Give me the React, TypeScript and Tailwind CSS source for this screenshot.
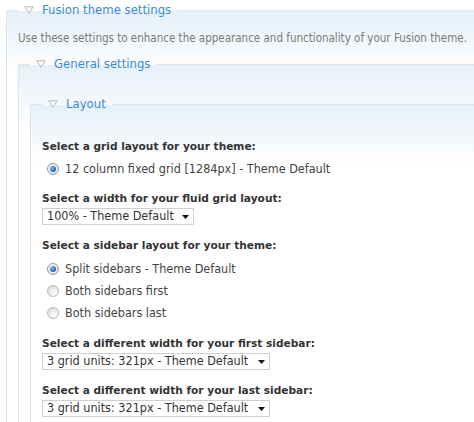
import type { ReactNode } from 'react';

function Legend({ children }: { children: ReactNode }) {
  return (
    <legend className="flex items-center gap-[8px] px-[6px] text-[13px] leading-[16px] text-[#3a8bd6]">
      <svg width="10" height="8" viewBox="0 0 10 8" className="shrink-0">
        <path d="M0.8 0.8 H9.2 L5 7.2 Z" fill="#fff" stroke="#b5b5b5" strokeWidth="1" />
      </svg>
      <span>{children}</span>
    </legend>
  );
}

function Radio({ checked, label }: { checked?: boolean; label: string }) {
  return (
    <div className="flex h-[22px] items-center pl-[5px]">
      {checked ? (
        <span className="flex h-[12px] w-[12px] items-center justify-center rounded-full border border-[#8e99a4] bg-[radial-gradient(circle_at_40%_35%,#fff,#d6dce2)]">
          <span className="h-[6px] w-[6px] rounded-full bg-[radial-gradient(circle_at_35%_35%,#8ec2f4,#1d5aa8_70%)]" />
        </span>
      ) : (
        <span className="h-[12px] w-[12px] rounded-full border border-[#b4b9be] bg-[radial-gradient(circle_at_65%_70%,#fff,#dcdcdc_80%)]" />
      )}
      <span className="ml-[6px] text-[12.5px] text-[#444]">{label}</span>
    </div>
  );
}

function Select({ value, width }: { value: string; width: string }) {
  return (
    <div className={`mt-[2px] flex h-[17px] items-center justify-between border border-[#cfcfcf] bg-white pl-[4px] pr-[4px] text-[12.5px] text-[#333] ${width}`}>
      <span className="leading-none">{value}</span>
      <svg width="7" height="4" viewBox="0 0 7 4">
        <path d="M0 0 H7 L3.5 4 Z" fill="#111" />
      </svg>
    </div>
  );
}

function Label({ children, className = '' }: { children: ReactNode; className?: string }) {
  return (
    <div
      className={`text-[10.6px] font-bold leading-[16px] text-[#333] ${className}`}
      style={{ fontFamily: '"DejaVu Sans", Verdana, sans-serif' }}
    >
      {children}
    </div>
  );
}

const fieldset =
  'border border-[#d9e6f2] bg-[linear-gradient(to_bottom,#e6eff9,#ffffff_60px)] -mr-10';

export default function App() {
  return (
    <div
      className="h-[422px] w-[474px] overflow-hidden bg-white"
      style={{ fontFamily: '"DejaVu Sans Condensed", "DejaVu Sans", Verdana, sans-serif' }}
    >
      <fieldset className={`mt-[2px] ml-[6px] pl-[11px] ${fieldset}`}>
        <Legend>Fusion theme settings</Legend>
        <p className="mt-[13px] text-[11.5px] leading-[14px] text-[#7a7a7a]">
          Use these settings to enhance the appearance and functionality of your Fusion theme.
        </p>

        <fieldset className={`mt-[11px] pl-[11px] ${fieldset}`}>
          <Legend>General settings</Legend>

          <fieldset className={`mt-[24px] pl-[11px] ${fieldset}`}>
            <Legend>Layout</Legend>

            <Label className="mt-[26px]">Select a grid layout for your theme:</Label>
            <div className="mt-[4px]">
              <Radio checked label="12 column fixed grid [1284px] - Theme Default" />
            </div>

            <Label className="mt-[10px]">Select a width for your fluid grid layout:</Label>
            <Select value="100% - Theme Default" width="w-[152px]" />

            <Label className="mt-[12px]">Select a sidebar layout for your theme:</Label>
            <div className="mt-[5px]">
              <Radio checked label="Split sidebars - Theme Default" />
              <Radio label="Both sidebars first" />
              <Radio label="Both sidebars last" />
            </div>

            <Label className="mt-[11px]">Select a different width for your first sidebar:</Label>
            <Select value="3 grid units: 321px - Theme Default" width="w-[228px]" />

            <Label className="mt-[12px]">Select a different width for your last sidebar:</Label>
            <Select value="3 grid units: 321px - Theme Default" width="w-[228px]" />
            <div className="h-[40px]" />
          </fieldset>
        </fieldset>
      </fieldset>
    </div>
  );
}
